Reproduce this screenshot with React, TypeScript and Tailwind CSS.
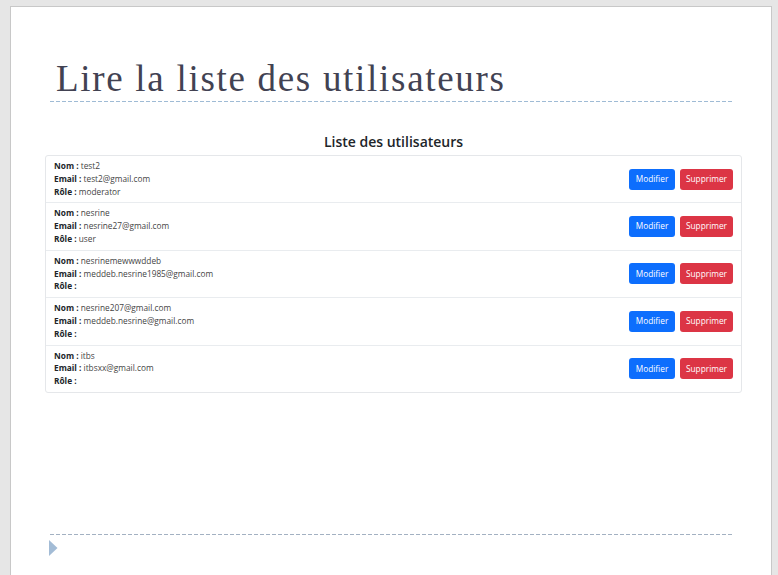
const users = [
  { nom: "test2", email: "test2@gmail.com", role: "moderator" },
  { nom: "nesrine", email: "nesrine27@gmail.com", role: "user" },
  { nom: "nesrinemewwwddeb", email: "meddeb.nesrine1985@gmail.com", role: "" },
  { nom: "nesrine207@gmail.com", email: "meddeb.nesrine@gmail.com", role: "" },
  { nom: "itbs", email: "itbsxx@gmail.com", role: "" },
];

function UserRow({ user, last }: { user: (typeof users)[0]; last: boolean }) {
  return (
    <div
      className={`flex items-center justify-between pl-[8px] pr-[8px] py-[4px] ${
        last ? "" : "border-b border-[#e9ecef]"
      }`}
    >
      <div className="text-[8.3px] leading-[12.8px] text-[#444]">
        <div>
          <span className="font-bold text-[#212529]">Nom :</span> {user.nom}
        </div>
        <div>
          <span className="font-bold text-[#212529]">Email :</span> {user.email}
        </div>
        <div>
          <span className="font-bold text-[#212529]">Rôle :</span> {user.role}
        </div>
      </div>
      <div className="flex gap-[5px]">
        <button className="h-[21px] w-[46px] rounded-[3px] bg-[#0d6efd] text-[8.3px] text-white">
          Modifier
        </button>
        <button className="h-[21px] w-[53px] rounded-[3px] bg-[#dc3545] text-[8.3px] text-white">
          Supprimer
        </button>
      </div>
    </div>
  );
}

export default function App() {
  return (
    <div className="h-[575px] w-[778px] overflow-hidden bg-[#e6e6e6] pl-[10px] pr-[6px] pt-[6px]">
      <div className="flex h-full flex-col border-l border-r border-t border-[#c8c8c8] bg-white">
        {/* Slide title */}
        <div className="ml-[39px] mr-[37px] mt-[50px]">
          <h1
            className="pl-[6px] text-[37px] leading-[44px] tracking-[1.7px] text-[#424252]"
            style={{ fontFamily: "'Liberation Serif', 'DejaVu Serif', serif" }}
          >
            Lire la liste des utilisateurs
          </h1>
          <div className="h-px bg-[repeating-linear-gradient(90deg,#9fbbd5_0_4px,transparent_4px_6px)]" />
        </div>

        {/* Embedded screenshot */}
        <div
          className="ml-[34px] mr-[29px] mt-[30px]"
          style={{ fontFamily: "'Open Sans', 'Noto Sans', sans-serif" }}
        >
          <h2 className="text-center text-[14px] font-semibold leading-[20px] text-[#212529]">
            Liste des utilisateurs
          </h2>
          <div className="mt-[3px] rounded-[3px] border border-[#e5e7ea]">
            {users.map((u, i) => (
              <UserRow key={i} user={u} last={i === users.length - 1} />
            ))}
          </div>
        </div>

        {/* Footer */}
        <div className="ml-[39px] mr-[37px] mt-[141px]">
          <div className="h-px bg-[repeating-linear-gradient(90deg,#a3b1c2_0_4px,transparent_4px_6px)]" />
          <svg width="9" height="16" viewBox="0 0 9 16" className="mt-[5px] -ml-px block">
            <path d="M0 0 L8.5 8 L0 16 Z" fill="#a3bcd6" />
          </svg>
        </div>
      </div>
    </div>
  );
}
